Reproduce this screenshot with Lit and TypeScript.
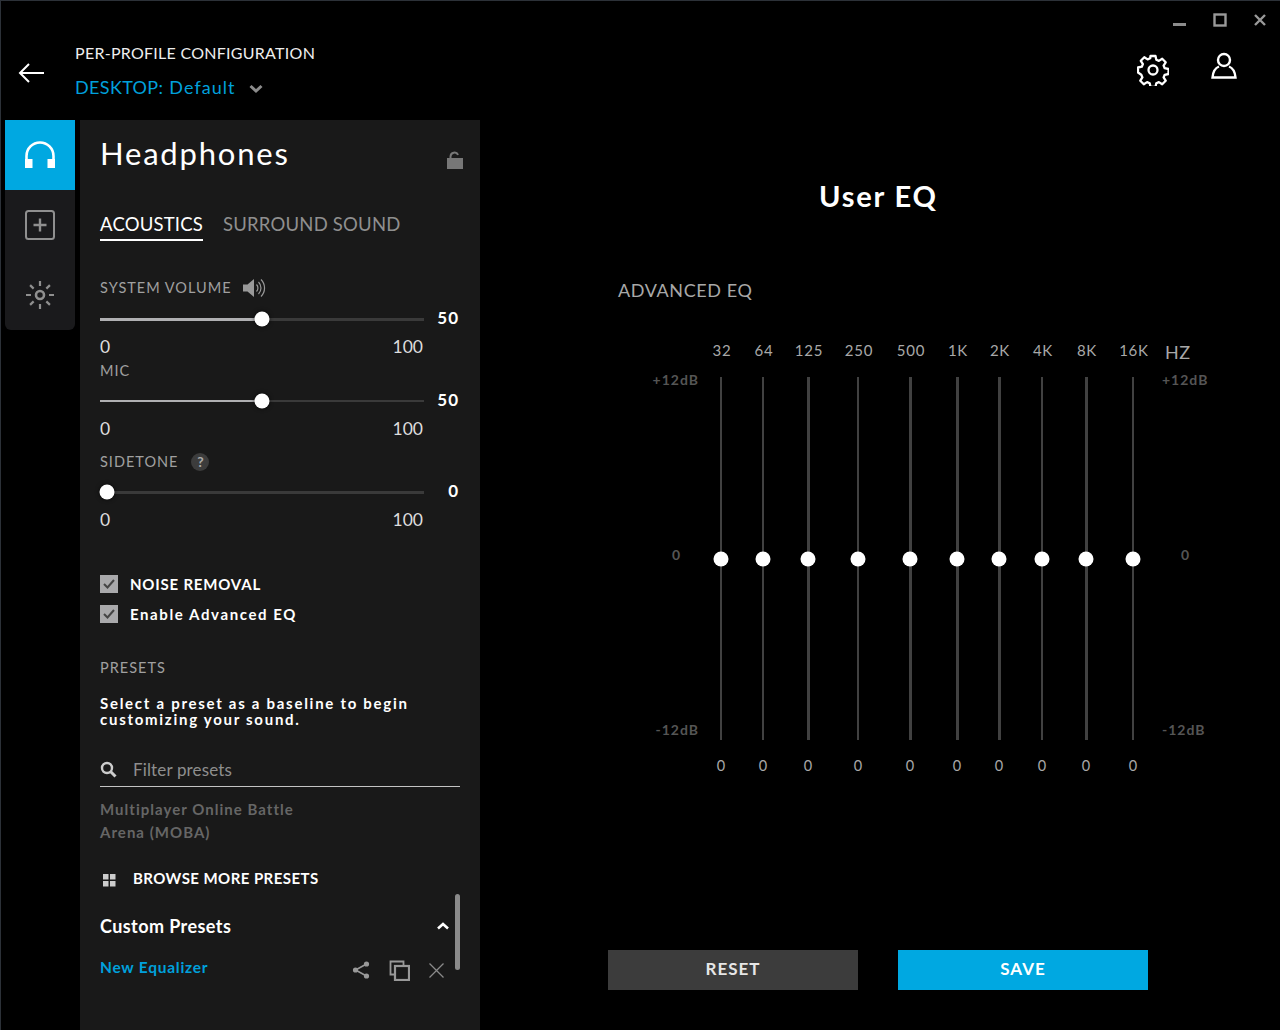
import { LitElement, html, css, svg } from 'lit';
import { customElement } from 'lit/decorators.js';

const BANDS = [
  { label: '32', width: 42, line: 2 },
  { label: '64', width: 42, line: 2 },
  { label: '125', width: 48, line: 3 },
  { label: '250', width: 52, line: 2 },
  { label: '500', width: 52, line: 3 },
  { label: '1K', width: 42, line: 3 },
  { label: '2K', width: 42, line: 3 },
  { label: '4K', width: 44, line: 2 },
  { label: '8K', width: 44, line: 3 },
  { label: '16K', width: 50, line: 2 },
];

const sunRays = [0, 45, 90, 135, 180, 225, 270, 315].map(
  (a) => svg`<line x1="15" y1="1" x2="15" y2="6" transform="rotate(${a} 15 15)" />`
);

@customElement('app-root')
export class AppRoot extends LitElement {
  static styles = css`
    :host {
      display: block;
      width: 1280px;
      height: 1030px;
      font-family: 'Lato', 'Open Sans', sans-serif;
      color: #fff;
    }
    svg { display: block; }

    .window {
      box-sizing: border-box;
      width: 1280px;
      height: 1030px;
      background: #000;
      border-top: 1px solid #2c3138;
      border-left: 1px solid #2c3138;
      display: grid;
      grid-template-columns: 479px 1fr;
      grid-template-rows: 119px 1fr;
      overflow: hidden;
    }

    /* header */
    .head-left {
      display: flex;
      padding-left: 17px;
    }
    .back { margin-top: 61px; }
    .head-titles { margin-left: 30px; padding-top: 42px; }
    .head-title {
      font-size: 16px;
      line-height: 19px;
      letter-spacing: 0.27px;
      color: #eee;
    }
    .profile {
      display: flex;
      align-items: center;
      margin-top: 13px;
      font-size: 18px;
      line-height: 24px;
      letter-spacing: 1.05px;
      color: #00a0dc;
    }
    .profile b { font-weight: 400; margin-right: 6px; letter-spacing: 0.35px; }
    .profile svg { margin: 4px 0 0 13px; }

    .head-right {
      display: flex;
      flex-direction: column;
      align-items: flex-end;
      padding-right: 13px;
    }
    .win-controls {
      display: flex;
      gap: 26px;
      align-items: center;
      height: 20px;
      margin-top: 9px;
    }
    .head-icons {
      display: flex;
      gap: 42px;
      margin: 22px 30px 0 0;
    }
    .gear { margin-top: 2px; }

    /* side */
    .side {
      display: flex;
      align-items: flex-start;
      padding-left: 4px;
      gap: 5px;
      min-height: 0;
    }
    .rail {
      width: 70px;
      height: 210px;
      background: #1a1a1c;
      border-radius: 0 0 6px 6px;
      overflow: hidden;
    }
    .rail-item {
      height: 70px;
      display: flex;
      align-items: center;
      justify-content: center;
    }
    .rail-item.active { background: #00a8e1; }

    .panel {
      box-sizing: border-box;
      width: 400px;
      height: 910px;
      background: #191919;
      padding: 0 20px;
      position: relative;
    }
    .panel-head {
      display: flex;
      justify-content: space-between;
      padding-top: 12px;
    }
    .panel-title {
      font-size: 31px;
      line-height: 42px;
      letter-spacing: 1.8px;
    }
    .lock { margin: 19px -3px 0 0; }

    .tabs {
      display: flex;
      gap: 20px;
      margin-top: 37px;
      font-size: 18.5px;
      line-height: 26px;
    }
    .tab { color: #8f8f8f; padding-bottom: 2px; letter-spacing: 0.2px; }
    .tab.active { color: #fff; border-bottom: 2px solid #fff; }

    .label {
      display: flex;
      align-items: center;
      font-size: 14.5px;
      line-height: 18px;
      letter-spacing: 1px;
      color: #a0a0a0;
    }
    .slider-row {
      display: flex;
      align-items: center;
      height: 20px;
      margin-top: 11px;
    }
    .track {
      width: 324px;
      height: 3px;
      background: #3a3a3a;
      position: relative;
    }
    .track.thin { height: 2px; }
    .fill { height: 100%; background: #b0b0b2; }
    .thumb {
      position: absolute;
      top: 50%;
      width: 15px;
      height: 15px;
      border-radius: 50%;
      background: #fff;
      transform: translate(-50%, -50%);
      box-shadow: 0 0 4px rgba(0, 0, 0, 0.7);
    }
    .value {
      width: 35px;
      text-align: right;
      font-size: 17px;
      font-weight: 700;
      letter-spacing: 1px;
      margin-top: -3px;
    }
    .range {
      display: flex;
      justify-content: space-between;
      width: 323px;
      margin-top: 7px;
      font-size: 17.5px;
      line-height: 22px;
      color: #ddd;
    }
    .slider-block { margin-top: 4px; }
    .slider-block.first { margin-top: 37px; }
    .slider-block.spaced { margin-top: 13px; }
    .help {
      width: 18px;
      height: 18px;
      margin-left: 13px;
      border-radius: 50%;
      background: #3c3c3c;
      color: #aaa;
      font-size: 14px;
      font-weight: 700;
      letter-spacing: 0;
      display: flex;
      align-items: center;
      justify-content: center;
    }

    .checks { margin-top: 44px; display: grid; gap: 12px; }
    .check {
      display: flex;
      align-items: center;
      gap: 12px;
      height: 18px;
      font-size: 15px;
      font-weight: 700;
      letter-spacing: 0.8px;
    }
    .check.wide { letter-spacing: 1.6px; }
    .box {
      width: 18px;
      height: 18px;
      background: #a9a9ab;
      display: flex;
      align-items: center;
      justify-content: center;
    }

    .presets-label { margin-top: 36px; }
    .blurb {
      margin: 18px 0 0;
      font-size: 15px;
      font-weight: 700;
      line-height: 16px;
      letter-spacing: 1.72px;
    }
    .filter {
      display: flex;
      align-items: center;
      gap: 16px;
      width: 360px;
      height: 33px;
      margin-top: 26px;
      border-bottom: 1px solid #c4c4c4;
      font-size: 17px;
      letter-spacing: 0.15px;
      color: #8e8e8e;
    }
    .preset-name {
      margin-top: 11px;
      font-size: 15px;
      font-weight: 700;
      line-height: 23px;
      letter-spacing: 1.03px;
      color: #666;
    }
    .browse {
      display: flex;
      align-items: center;
      gap: 16px;
      margin-top: 24px;
      font-size: 15px;
      font-weight: 700;
      letter-spacing: 0.44px;
      height: 20px;
    }
    .custom {
      display: flex;
      justify-content: space-between;
      align-items: center;
      width: 349px;
      margin-top: 26px;
      font-size: 18px;
      font-weight: 700;
      line-height: 24px;
      letter-spacing: 0.42px;
    }
    .preset-row {
      display: flex;
      align-items: center;
      justify-content: space-between;
      width: 344px;
      margin-top: 17px;
      height: 24px;
    }
    .preset-link {
      font-size: 15.5px;
      font-weight: 700;
      letter-spacing: 0.75px;
      color: #00a0dc;
    }
    .row-icons { display: flex; align-items: center; gap: 19px; margin-top: 6px; }
    .scrollbar {
      position: absolute;
      right: 20px;
      top: 774px;
      width: 5px;
      height: 76px;
      border-radius: 3px;
      background: #8a8a8a;
    }

    /* main */
    .main { display: flex; flex-direction: column; min-height: 0; }
    .eq-title {
      margin-top: 58px;
      padding-left: 339px;
      font-size: 29px;
      font-weight: 700;
      line-height: 36px;
      letter-spacing: 1.8px;
    }
    .adv {
      margin-top: 64px;
      padding-left: 138px;
      font-size: 18px;
      line-height: 24px;
      letter-spacing: 0.6px;
      color: #a8a8a8;
    }
    .eq {
      display: grid;
      grid-template-columns: 220px auto 1fr;
      margin-top: 39px;
    }
    .scale {
      display: flex;
      flex-direction: column;
      justify-content: space-between;
      height: 368px;
      font-size: 14px;
      font-weight: 700;
      line-height: 18px;
      letter-spacing: 1px;
      color: #555;
    }
    .scale.left { align-items: flex-end; width: 219px; margin-top: 30px; }
    .scale.left .zero { padding-right: 18px; }
    .bands { display: flex; }
    .band { display: flex; flex-direction: column; align-items: center; }
    .freq {
      height: 20px;
      padding-left: 2px;
      font-size: 15px;
      line-height: 18px;
      letter-spacing: 0.8px;
      color: #a8a8a8;
    }
    .slot {
      position: relative;
      height: 363px;
      margin-top: 16px;
      background: #414141;
    }
    .slot .thumb { left: 50%; top: 182px; box-shadow: none; }
    .band-val {
      margin-top: 16px;
      font-size: 14.5px;
      line-height: 20px;
      color: #a8a8a8;
    }
    .scale-right { display: flex; flex-direction: column; padding-left: 7px; }
    .hz {
      font-size: 18px;
      line-height: 20px;
      letter-spacing: 0.5px;
      color: #a8a8a8;
      margin-top: 1px;
    }
    .scale.right { margin: 9px 0 0 -3px; align-items: flex-start; }
    .scale.right .zero { padding-left: 19px; }

    .actions {
      display: flex;
      gap: 40px;
      margin-top: auto;
      margin-bottom: 40px;
      padding-left: 128px;
    }
    .btn {
      box-sizing: border-box;
      width: 250px;
      height: 40px;
      padding-bottom: 3px;
      display: flex;
      align-items: center;
      justify-content: center;
      font-size: 17px;
      font-weight: 700;
      letter-spacing: 1px;
    }
    .btn.reset { background: #3c3c3c; color: #e6e6e6; }
    .btn.save { background: #00a8e1; color: #fff; }
  `;

  private slider(label: unknown, value: number, thumb: number, cls = '', thin = false) {
    return html`
      <div class="slider-block ${cls}">
        <div class="label">${label}</div>
        <div class="slider-row">
          <div class="track ${thin ? 'thin' : ''}">
            <div class="fill" style="width:${thumb}px"></div>
            <div class="thumb" style="left:${thumb}px"></div>
          </div>
          <div class="value">${value}</div>
        </div>
        <div class="range"><span>0</span><span>100</span></div>
      </div>
    `;
  }

  render() {
    return html`
      <div class="window">
        <div class="head-left">
          <svg class="back" width="27" height="22" viewBox="0 0 27 22" fill="none" stroke="#fff" stroke-width="2">
            <path d="M26 11H2M11 2l-9 9 9 9" />
          </svg>
          <div class="head-titles">
            <div class="head-title">PER-PROFILE CONFIGURATION</div>
            <div class="profile">
              <b>DESKTOP:</b> Default
              <svg width="14" height="10" viewBox="0 0 14 10" fill="none" stroke="#8c8c8c" stroke-width="3">
                <path d="M1.5 2l5.5 5 5.5-5" />
              </svg>
            </div>
          </div>
        </div>

        <div class="head-right">
          <div class="win-controls">
            <svg width="14" height="14" viewBox="0 0 14 14"><rect x="0" y="10" width="13" height="3" fill="#8c8c8c" /></svg>
            <svg width="14" height="14" viewBox="0 0 14 14" fill="none" stroke="#999" stroke-width="2.4"><rect x="1.5" y="1.5" width="11" height="11" /></svg>
            <svg width="14" height="14" viewBox="0 0 14 14" fill="none" stroke="#999" stroke-width="2.4"><path d="M2 2l10 10M12 2L2 12" /></svg>
          </div>
          <div class="head-icons">
            <svg class="gear" width="32" height="32" viewBox="0 0 32 32" fill="none" stroke="#fff" stroke-width="2.3" stroke-linejoin="round">
              <path d="M13.5 2h5l.8 3.8 2.6 1.1 3.3-2.1 3.5 3.5-2.1 3.3 1.1 2.6 3.8.8v5l-3.8.8-1.1 2.6 2.1 3.3-3.5 3.5-3.3-2.1-2.6 1.1-.8 3.8h-5l-.8-3.8-2.6-1.1-3.3 2.1-3.5-3.5 2.1-3.3-1.1-2.6L1 18.5v-5l3.8-.8 1.1-2.6-2.1-3.3 3.5-3.5 3.3 2.1 2.6-1.1z" />
              <circle cx="16" cy="16" r="4.5" />
            </svg>
            <svg width="26" height="28" viewBox="0 0 26 28" fill="none" stroke="#fff" stroke-width="2.4">
              <circle cx="13" cy="8" r="6" />
              <path d="M8 14.5C4 16 2 20 1.5 25.5h23C24 20 22 16 18 14.5" />
            </svg>
          </div>
        </div>

        <div class="side">
          <nav class="rail">
            <div class="rail-item active">
              <svg width="30" height="28" viewBox="0 0 30 28" fill="none">
                <path d="M1.5 19v-4a13.5 13.5 0 0 1 27 0v4" stroke="#fff" stroke-width="2.6" />
                <rect x="0" y="18" width="7.5" height="9" fill="#fff" />
                <rect x="22.5" y="18" width="7.5" height="9" fill="#fff" />
              </svg>
            </div>
            <div class="rail-item">
              <svg width="30" height="30" viewBox="0 0 30 30" fill="none" stroke="#8f8f8f" stroke-width="2">
                <rect x="1" y="1" width="28" height="28" rx="2.5" />
                <path d="M15 8.5v13M8.5 15h13" stroke-width="2.4" />
              </svg>
            </div>
            <div class="rail-item">
              <svg width="30" height="30" viewBox="0 0 30 30" fill="none" stroke="#8f8f8f" stroke-width="2.2">
                <circle cx="15" cy="15" r="4" stroke-width="2.6" />
                ${sunRays}
              </svg>
            </div>
          </nav>

          <section class="panel">
            <div class="panel-head">
              <div class="panel-title">Headphones</div>
              <svg class="lock" width="16" height="18" viewBox="0 0 16 18" fill="none">
                <path d="M3.5 8V5.5a4 4 0 0 1 7.6-1.6" stroke="#777" stroke-width="2" />
                <rect x="0" y="7" width="16" height="11" fill="#777" />
              </svg>
            </div>

            <div class="tabs">
              <div class="tab active">ACOUSTICS</div>
              <div class="tab">SURROUND SOUND</div>
            </div>

            ${this.slider(
              html`SYSTEM VOLUME
                <svg style="margin-left:11px" width="24" height="20" viewBox="0 0 24 20" fill="none" stroke="#999" stroke-width="1.2">
                  <path d="M0 6.5h4.5L11 1v18l-6.5-5.5H0z" fill="#999" stroke="none" />
                  <path d="M13.5 6.5a5 5 0 0 1 0 7M15.5 4a8.5 8.5 0 0 1 0 12M18 1.5a12 12 0 0 1 0 17" />
                </svg>`,
              50, 162, 'first'
            )}
            ${this.slider('MIC', 50, 162, '', true)}
            ${this.slider(html`SIDETONE <span class="help">?</span>`, 0, 7, 'spaced')}

            <div class="checks">
              <div class="check">
                <span class="box"><svg width="12" height="10" viewBox="0 0 12 10" fill="none" stroke="#444" stroke-width="2"><path d="M1 5l3.5 3.5L11 1" /></svg></span>
                NOISE REMOVAL
              </div>
              <div class="check wide">
                <span class="box"><svg width="12" height="10" viewBox="0 0 12 10" fill="none" stroke="#444" stroke-width="2"><path d="M1 5l3.5 3.5L11 1" /></svg></span>
                Enable Advanced EQ
              </div>
            </div>

            <div class="label presets-label">PRESETS</div>
            <p class="blurb">Select a preset as a baseline to begin customizing your sound.</p>

            <div class="filter">
              <svg width="17" height="17" viewBox="0 0 17 17" fill="none" stroke="#ccc" stroke-width="2.4">
                <circle cx="7" cy="7" r="5" />
                <path d="M10.5 10.5l5 5" stroke-width="3" />
              </svg>
              Filter presets
            </div>

            <div class="preset-name">Multiplayer Online Battle<br />Arena (MOBA)</div>

            <div class="browse">
              <svg width="17" height="14" viewBox="0 0 17 14" fill="#ccc" style="margin-top:3px">
                <rect x="3" y="1" width="5.5" height="5.5" /><rect x="10" y="1" width="5.5" height="5.5" />
                <rect x="3" y="8" width="5.5" height="5.5" /><rect x="10" y="8" width="5.5" height="5.5" />
              </svg>
              BROWSE MORE PRESETS
            </div>

            <div class="custom">
              Custom Presets
              <svg width="12" height="8" viewBox="0 0 12 8" fill="none" stroke="#fff" stroke-width="2.6"><path d="M1 6.5l5-4.5 5 4.5" /></svg>
            </div>

            <div class="preset-row">
              <span class="preset-link">New Equalizer</span>
              <span class="row-icons">
                <svg width="18" height="18" viewBox="0 0 18 18" fill="#999" stroke="#999" stroke-width="1.6">
                  <path d="M14.5 3L3.5 9l11 6" fill="none" />
                  <circle cx="14.5" cy="3" r="1.8" /><circle cx="3.5" cy="9" r="1.8" /><circle cx="14.5" cy="15" r="1.8" />
                </svg>
                <svg width="21" height="21" viewBox="0 0 21 21" fill="none" stroke="#999" stroke-width="2.2">
                  <path d="M5.5 14.5H1.5V1.5h13v4" stroke-width="1.8" />
                  <rect x="6" y="6" width="14" height="14" />
                </svg>
                <svg width="15" height="15" viewBox="0 0 15 15" fill="none" stroke="#8a8a8a" stroke-width="1.3"><path d="M.5.5l14 14M14.5.5l-14 14" /></svg>
              </span>
            </div>

            <div class="scrollbar"></div>
          </section>
        </div>

        <main class="main">
          <div class="eq-title">User EQ</div>
          <div class="adv">ADVANCED EQ</div>
          <div class="eq">
            <div class="scale left"><span>+12dB</span><span class="zero">0</span><span>-12dB</span></div>
            <div class="bands">
              ${BANDS.map(
                (b) => html`
                  <div class="band" style="width:${b.width}px">
                    <div class="freq">${b.label}</div>
                    <div class="slot" style="width:${b.line}px"><div class="thumb"></div></div>
                    <div class="band-val">0</div>
                  </div>
                `
              )}
            </div>
            <div class="scale-right">
              <div class="hz">HZ</div>
              <div class="scale right"><span>+12dB</span><span class="zero">0</span><span>-12dB</span></div>
            </div>
          </div>
          <div class="actions">
            <div class="btn reset">RESET</div>
            <div class="btn save">SAVE</div>
          </div>
        </main>
      </div>
    `;
  }
}
